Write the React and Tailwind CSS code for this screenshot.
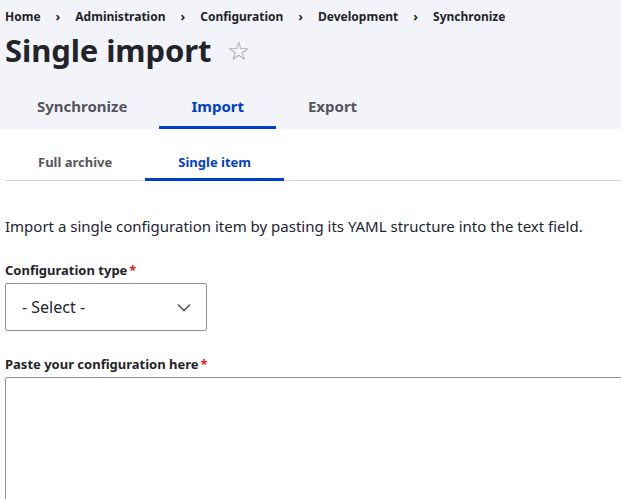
import React from 'react';

const crumbs = ['Home', 'Administration', 'Configuration', 'Development', 'Synchronize'];

const App = () => {
  return (
    <div className="min-h-[499px] bg-white text-[#222330] overflow-hidden" style={{ fontFamily: '"Noto Sans", sans-serif' }}>
      {/* Header */}
      <div className="bg-[#f3f4f9] pl-[5px]">
        <nav className="flex items-center h-[33px] pt-[1px] text-[12px] font-bold text-[#232429]">
          {crumbs.map((c, i) => (
            <React.Fragment key={c}>
              {i > 0 && <span className="mx-[15px] text-[13px]">›</span>}
              <span>{c}</span>
            </React.Fragment>
          ))}
        </nav>
        <div className="flex items-center h-[34px]">
          <h1 className="text-[31px] font-bold leading-none tracking-[-0.1px] text-[#232429]">Single import</h1>
          <span className="ml-[16px] text-[26px] leading-none text-[#9a9aa0]">☆</span>
        </div>
        <div className="flex mt-[20px]">
          {['Synchronize', 'Import', 'Export'].map((t) => (
            <div
              key={t}
              className={`px-[32px] pt-[8px] pb-[8px] text-[15px] font-bold border-b-[3px] ${
                t === 'Import' ? 'text-[#003ecc] border-[#003ecc]' : 'text-[#55565b] border-transparent'
              }`}
            >
              {t}
            </div>
          ))}
        </div>
      </div>

      {/* Secondary tabs */}
      <div className="pl-[5px]">
        <div className="flex border-b border-[#d3d4d9] mt-[24px]">
          {['Full archive', 'Single item'].map((t) => (
            <div
              key={t}
              className={`px-[33px] pb-[6px] text-[13px] font-bold border-b-[3px] -mb-[1px] ${
                t === 'Single item' ? 'text-[#003ecc] border-[#003ecc]' : 'text-[#55565b] border-transparent'
              }`}
            >
              {t}
            </div>
          ))}
        </div>

        <p className="mt-[34px] text-[15px] text-[#222330]">
          Import a single configuration item by pasting its YAML structure into the text field.
        </p>

        <label className="block mt-[23px] text-[13px] font-bold text-[#232429]">
          Configuration type<span className="text-[#dc2323] ml-[2px]">*</span>
        </label>
        <div className="mt-[3px] w-[202px] h-[48px] border border-[#8e929c] rounded-[2px] flex items-center justify-between pl-[16px] pr-[15px] text-[16px] text-[#222330]">
          <span>- Select -</span>
          <svg width="14" height="9" viewBox="0 0 14 9" fill="none">
            <path d="M1 1.5l6 6 6-6" stroke="#545560" strokeWidth="1.6" />
          </svg>
        </div>

        <label className="block mt-[24px] text-[13px] font-bold text-[#232429]">
          Paste your configuration here<span className="text-[#dc2323] ml-[2px]">*</span>
        </label>
        <div className="mt-[2px] w-[700px] h-[150px] border border-[#8e929c] rounded-[2px]" />
      </div>
    </div>
  );
};

export default App;
